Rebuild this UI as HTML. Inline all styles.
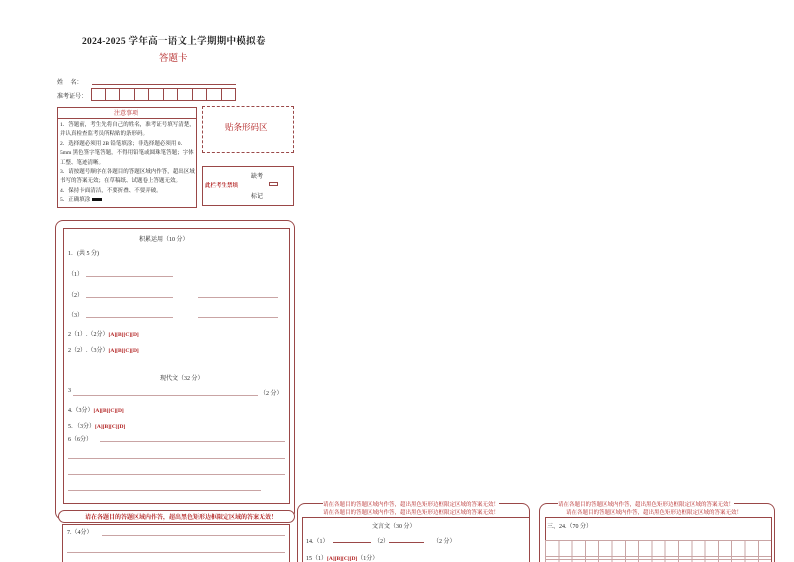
<!DOCTYPE html>
<html><head><meta charset="utf-8"><style>
*{margin:0;padding:0;box-sizing:border-box}
html,body{width:794px;height:562px;overflow:hidden}
body{background:#fff;position:relative;font-family:"Liberation Serif","Noto Serif CJK SC",serif;color:#222}
.a{position:absolute;white-space:nowrap}
.r{color:#b01c1c}
.s{font-size:6px}
.l{position:absolute;height:1px;background:#c9a4a4}
.b{position:absolute;border:1px solid #9a4848}
.ab{color:#b01c1c;font-weight:bold;font-size:5.5px}
</style></head><body>
<div class="a" style="left:82px;top:33px;font-size:9.5px;font-weight:bold;letter-spacing:0.3px">2024-2025 学年高一语文上学期期中模拟卷</div>
<div class="a r" style="left:159px;top:50px;font-size:9.5px">答题卡</div>
<div class="a s" style="left:57px;top:77px">姓&nbsp;&nbsp;&nbsp;&nbsp;&nbsp;名：</div>
<div class="l" style="left:92px;top:84px;width:144px;background:#9a4848"></div>
<div class="a s" style="left:57px;top:91px">准考证号：</div>
<div class="a" style="left:91px;top:88px;display:flex">
<div style="width:14.5px;height:13px;border:1px solid #9a4848"></div><div style="width:14.5px;height:13px;border:1px solid #9a4848;border-left:0"></div><div style="width:14.5px;height:13px;border:1px solid #9a4848;border-left:0"></div><div style="width:14.5px;height:13px;border:1px solid #9a4848;border-left:0"></div><div style="width:14.5px;height:13px;border:1px solid #9a4848;border-left:0"></div><div style="width:14.5px;height:13px;border:1px solid #9a4848;border-left:0"></div><div style="width:14.5px;height:13px;border:1px solid #9a4848;border-left:0"></div><div style="width:14.5px;height:13px;border:1px solid #9a4848;border-left:0"></div><div style="width:14.5px;height:13px;border:1px solid #9a4848;border-left:0"></div><div style="width:14.5px;height:13px;border:1px solid #9a4848;border-left:0"></div></div>
<div class="b" style="left:57px;top:107px;width:140px;height:101px"></div>
<div class="l" style="left:57px;top:118px;width:140px;background:#9a4848"></div>
<div class="a r" style="left:114px;top:108px;font-size:6px">注意事项</div>
<div class="a" style="left:60px;top:121px;font-size:5.5px;line-height:9.4px;white-space:normal;width:135px">1．答题前，考生先将自己的姓名，准考证号填写清楚，并认真检查监考员所粘贴的条形码。<br>2．选择题必须用 2B 铅笔填涂；非选择题必须用 0．5mm 黑色签字笔答题，不得用铅笔或圆珠笔答题；字体工整、笔迹清晰。<br>3．请按题号顺序在各题目的答题区域内作答，超出区域书写的答案无效；在草稿纸、试题卷上答题无效。<br>4．保持卡面清洁，不要折叠、不要弄破。<br>5．正确填涂 <span style="display:inline-block;width:10px;height:3px;background:#111;vertical-align:middle"></span></div>
<div class="a" style="left:202px;top:106px;width:92px;height:47px;border:1px dashed #9a4848"></div>
<div class="a r" style="left:225px;top:121px;font-size:8.5px">贴条形码区</div>
<div class="b" style="left:202px;top:166px;width:92px;height:40px"></div>
<div class="a s" style="left:251px;top:171px">缺考</div>
<div class="a r" style="left:205px;top:181px;font-size:5.5px;font-weight:bold">此栏考生禁填</div>
<div class="a" style="left:269px;top:182px;width:9px;height:4px;border:1px solid #9a4848"></div>
<div class="a s" style="left:251px;top:191px">标记</div>

<div class="b" style="left:55px;top:220px;width:240px;height:300px;border-radius:8px"></div>
<div class="b" style="left:63px;top:228px;width:227px;height:276px"></div>
<div class="a s" style="left:139px;top:234px">积累运用（10 分）</div>
<div class="a s" style="left:68px;top:248px">1．(共 5 分)</div>
<div class="a s" style="left:68px;top:269px">（1）</div><div class="l" style="left:86px;top:276px;width:87px"></div>
<div class="a s" style="left:68px;top:290px">（2）</div><div class="l" style="left:86px;top:297px;width:87px"></div><div class="l" style="left:198px;top:297px;width:80px"></div>
<div class="a s" style="left:68px;top:310px">（3）</div><div class="l" style="left:86px;top:317px;width:87px"></div><div class="l" style="left:198px;top:317px;width:80px"></div>
<div class="a s" style="left:68px;top:329px">2（1）.（2分）<span class="ab">[A][B][C][D]</span></div>
<div class="a s" style="left:68px;top:345px">2（2）.（3分）<span class="ab">[A][B][C][D]</span></div>
<div class="a s" style="left:160px;top:373px">现代文（32 分）</div>
<div class="a s" style="left:68px;top:388px">3</div><div class="l" style="left:73px;top:395px;width:185px"></div><div class="a s" style="left:260px;top:388px">（2 分）</div>
<div class="a s" style="left:68px;top:405px">4.（3分）<span class="ab">[A][B][C][D]</span></div>
<div class="a s" style="left:68px;top:421px">5．（3分）<span class="ab">[A][B][C][D]</span></div>
<div class="a s" style="left:68px;top:434px">6（6分）</div><div class="l" style="left:100px;top:441px;width:185px"></div>
<div class="l" style="left:68px;top:458px;width:217px"></div>
<div class="l" style="left:68px;top:474px;width:217px"></div>
<div class="l" style="left:68px;top:490px;width:193px"></div>
<div class="a" style="left:58px;top:510px;width:237px;height:13px;border:1px solid #9a4848;border-radius:7px;background:#fff"></div>
<div class="a r" style="left:85px;top:512px;font-size:6px;font-weight:bold">请在各题目的答题区域内作答，超出黑色矩形边框限定区域的答案无效！</div>
<div class="b" style="left:62px;top:524px;width:228px;height:40px"></div>
<div class="a s" style="left:67px;top:527px">7.（4分）</div><div class="l" style="left:102px;top:535px;width:183px"></div>
<div class="l" style="left:67px;top:552px;width:218px"></div>

<div class="b" style="left:297px;top:503px;width:233px;height:70px;border-radius:8px"></div>
<div class="a r" style="left:323px;top:500px;font-size:5.5px;background:#fff">请在各题目的答题区域内作答，超出黑色矩形边框限定区域的答案无效！</div>
<div class="a r" style="left:323px;top:508px;font-size:5.5px">请在各题目的答题区域内作答，超出黑色矩形边框限定区域的答案无效！</div>
<div class="b" style="left:302px;top:517px;width:228px;height:50px"></div>
<div class="a s" style="left:372px;top:521px">文言文（30 分）</div>
<div class="a s" style="left:306px;top:536px">14.（1）</div><div class="l" style="left:333px;top:542px;width:38px;background:#9a4848"></div>
<div class="a s" style="left:374px;top:536px">（2）</div><div class="l" style="left:389px;top:542px;width:35px;background:#9a4848"></div>
<div class="a s" style="left:433px;top:536px">（2 分）</div>
<div class="a s" style="left:306px;top:553px">15（1）<span class="ab">[A][B][C][D]</span>（1分）</div>

<div class="b" style="left:539px;top:503px;width:236px;height:70px;border-radius:8px"></div>
<div class="a r" style="left:558px;top:500px;font-size:5.5px;background:#fff">请在各题目的答题区域内作答，超出黑色矩形边框限定区域的答案无效！</div>
<div class="a r" style="left:566px;top:508px;font-size:5.5px">请在各题目的答题区域内作答，超出黑色矩形边框限定区域的答案无效！</div>
<div class="b" style="left:545px;top:517px;width:227px;height:50px"></div>
<div class="a s" style="left:547px;top:521px">三、24.（70 分）</div>
<div class="a" style="left:545px;top:540px;width:226px;height:30px;border-top:1px solid #c9a4a4;background:repeating-linear-gradient(90deg,#c9a4a4 0 1px,transparent 1px 13.3px)"></div>
<div class="l" style="left:545px;top:556px;width:226px"></div>
<div class="l" style="left:545px;top:559px;width:226px"></div>
</body></html>
